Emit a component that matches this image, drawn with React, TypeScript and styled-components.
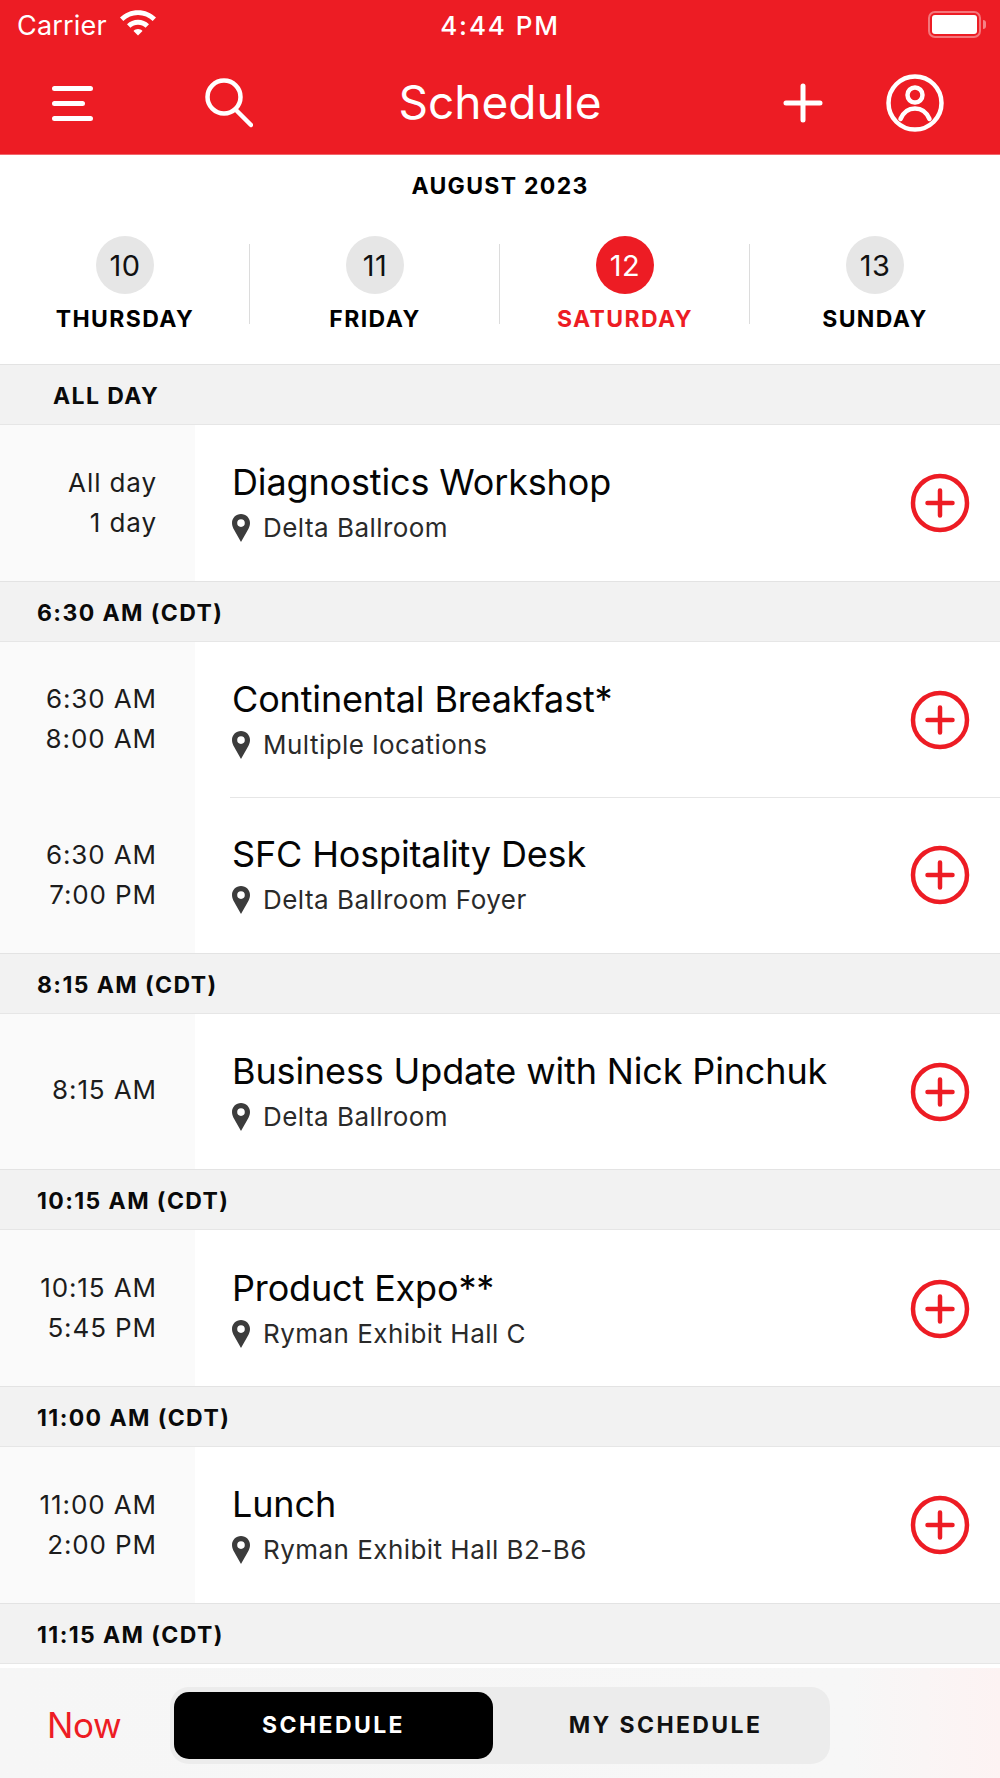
import React from "react";
import styled, { createGlobalStyle } from "styled-components";

const days = [
  { num: "10", name: "THURSDAY" },
  { num: "11", name: "FRIDAY" },
  { num: "12", name: "SATURDAY", active: true },
  { num: "13", name: "SUNDAY" },
];

const sections = [
  {
    label: "ALL DAY",
    indent: true,
    items: [{ start: "All day", end: "1 day", title: "Diagnostics Workshop", place: "Delta Ballroom" }],
  },
  {
    label: "6:30 AM (CDT)",
    items: [
      { start: "6:30 AM", end: "8:00 AM", title: "Continental Breakfast*", place: "Multiple locations" },
      { start: "6:30 AM", end: "7:00 PM", title: "SFC Hospitality Desk", place: "Delta Ballroom Foyer" },
    ],
  },
  {
    label: "8:15 AM (CDT)",
    items: [{ start: "8:15 AM", title: "Business Update with Nick Pinchuk", place: "Delta Ballroom" }],
  },
  {
    label: "10:15 AM (CDT)",
    items: [{ start: "10:15 AM", end: "5:45 PM", title: "Product Expo**", place: "Ryman Exhibit Hall C" }],
  },
  {
    label: "11:00 AM (CDT)",
    items: [{ start: "11:00 AM", end: "2:00 PM", title: "Lunch", place: "Ryman Exhibit Hall B2-B6" }],
  },
];

export default function App() {
  return (
    <Page>
      <GlobalStyle />
      <TopBar>
        <StatusBar>
          <Carrier>
            Carrier
            <svg width="38" height="28" viewBox="0 0 38 28" fill="#fff">
              <path d="M1 9.5C5.8 4.8 12 2.2 19 2.2S32.2 4.8 37 9.5l-3.3 3.4C29.8 9.2 24.700 7 19 7S8.200 9.200 4.300 12.900z" />
              <path d="M8 16.300C11 13.500 14.800 11.800 19 11.800s8 1.700 11 4.500l-3.400 3.400C24.600 17.800 21.900 16.700 19 16.700s-5.600 1.100-7.600 3z" />
              <path d="M14.500 22.900C15.700 21.800 17.300 21.100 19 21.100s3.300.7 4.500 1.800L19 27.400z" />
            </svg>
          </Carrier>
          <Clock>4:44 PM</Clock>
          <Battery>
            <BatteryBody>
              <BatteryFill />
            </BatteryBody>
            <BatteryCap />
          </Battery>
        </StatusBar>
        <NavBar>
          <NavGroup>
            <svg width="41" height="35" viewBox="0 0 41 35" fill="none" stroke="#fff" strokeWidth="5" strokeLinecap="round">
              <path d="M2.500 2.500h36M2.500 17.500h28M2.500 32.500h36" />
            </svg>
            <svg width="48" height="50" viewBox="0 0 48 50" fill="none" stroke="#fff" strokeLinecap="round">
              <circle cx="19" cy="19" r="16.500" strokeWidth="4.500" />
              <path d="M32 33l14 14" strokeWidth="4.500" />
            </svg>
          </NavGroup>
          <NavTitle>Schedule</NavTitle>
          <NavGroupEnd>
            <svg width="40" height="40" viewBox="0 0 40 40" fill="none" stroke="#fff" strokeWidth="5" strokeLinecap="round">
              <path d="M20 3v34M3 20h34" />
            </svg>
            <svg width="60" height="60" viewBox="0 0 60 60" fill="none" stroke="#fff" strokeWidth="4.500">
              <circle cx="30" cy="30" r="26.500" />
              <circle cx="30" cy="22" r="7.500" />
              <path d="M15.500 46c3-7 8.500-10.500 14.500-10.500S41.500 39 44.500 46" strokeLinecap="round" />
            </svg>
          </NavGroupEnd>
        </NavBar>
      </TopBar>

      <DateStrip>
        <MonthLabel>AUGUST 2023</MonthLabel>
        <DayRow>
          {days.map((d) => (
            <DayCell key={d.num}>
              <DayNum $active={d.active}>{d.num}</DayNum>
              <DayName $active={d.active}>{d.name}</DayName>
            </DayCell>
          ))}
        </DayRow>
      </DateStrip>

      {sections.map((s) => (
        <section key={s.label}>
          <SectionHead $indent={s.indent}>{s.label}</SectionHead>
          {s.items.map((item, i) => (
            <Row key={item.title}>
              <TimeCol $single={!item.end}>
                <span>{item.start}</span>
                {item.end && <span>{item.end}</span>}
              </TimeCol>
              <RowMain>
                <RowInner $divider={i > 0}>
                  <RowText>
                    <Title>{item.title}</Title>
                    <Place>
                      <svg width="18" height="28" viewBox="0 0 18 28">
                        <path
                          fillRule="evenodd"
                          fill="#3c3c3c"
                          d="M9 0c5 0 9 3.900 9 8.900 0 2.600-1 5.100-2.500 7.700C13.800 19.600 11.500 23.800 9 28 6.500 23.800 4.200 19.600 2.500 16.600 1 14 0 11.500 0 8.900 0 3.900 4 0 9 0zm0 5.300a3.800 3.800 0 100 7.600 3.800 3.800 0 000-7.600z"
                        />
                      </svg>
                      {item.place}
                    </Place>
                  </RowText>
                  <svg width="60" height="60" viewBox="0 0 60 60" fill="none" stroke="#ed1c24" strokeLinecap="round">
                    <circle cx="30" cy="30" r="27" strokeWidth="4.500" />
                    <path d="M30 17.500v25M17.500 30h25" strokeWidth="4.500" />
                  </svg>
                </RowInner>
              </RowMain>
            </Row>
          ))}
        </section>
      ))}
      <SectionHead>11:15 AM (CDT)</SectionHead>

      <BottomBar>
        <NowLink>Now</NowLink>
        <Segments>
          <Segment $active>SCHEDULE</Segment>
          <Segment $offset>MY SCHEDULE</Segment>
        </Segments>
      </BottomBar>
    </Page>
  );
}

const GlobalStyle = createGlobalStyle`
  body {
    margin: 0;
    background: #fff;
    font-family: Inter, "Liberation Sans", sans-serif;
  }
`;

const Page = styled.div`
  width: 1000px;
  height: 1778px;
  overflow: hidden;
  display: flex;
  flex-direction: column;
  color: #000;
`;

const TopBar = styled.header`
  height: 155px;
  flex: none;
  background: #ed1c24;
  color: #fff;
  border-bottom: 1px solid #f2666c;
  box-sizing: border-box;
`;

const StatusBar = styled.div`
  height: 50px;
  display: grid;
  grid-template-columns: 1fr auto 1fr;
  align-items: center;
  padding: 0 17px;
`;

const Carrier = styled.div`
  display: flex;
  align-items: center;
  gap: 12px;
  font-size: 27px;
  letter-spacing: 0.2px;
  svg {
    margin-top: -6px;
  }
`;

const Clock = styled.div`
  font-size: 26px;
  font-weight: 500;
  letter-spacing: 1.9px;
`;

const Battery = styled.div`
  justify-self: end;
  display: flex;
  align-items: center;
  gap: 2px;
  margin: -2px -3px 0 0;
`;

const BatteryBody = styled.div`
  width: 53px;
  height: 27px;
  box-sizing: border-box;
  border: 2px solid rgba(255, 255, 255, 0.4);
  border-radius: 7px;
  padding: 2px;
`;

const BatteryFill = styled.div`
  height: 100%;
  background: #fff;
  border-radius: 3px;
`;

const BatteryCap = styled.div`
  width: 3px;
  height: 9px;
  background: rgba(255, 255, 255, 0.45);
  border-radius: 0 3px 3px 0;
`;

const NavBar = styled.nav`
  height: 104px;
  display: grid;
  grid-template-columns: 1fr auto 1fr;
  align-items: center;
  padding: 0 55px 6px 52px;
`;

const NavGroup = styled.div`
  display: flex;
  align-items: center;
  gap: 112px;
  margin-top: 2px;
`;

const NavGroupEnd = styled(NavGroup)`
  justify-content: flex-end;
  gap: 62px;
`;

const NavTitle = styled.h1`
  margin: 0 0 0 3px;
  font-size: 46px;
  font-weight: 400;
  letter-spacing: 0;
`;

const DateStrip = styled.div`
  height: 209px;
  flex: none;
  box-sizing: border-box;
  padding-top: 17px;
  background: #fff;
`;

const MonthLabel = styled.div`
  text-align: center;
  font-size: 23px;
  font-weight: 700;
  letter-spacing: 1.3px;
  line-height: 28px;
`;

const DayRow = styled.div`
  display: grid;
  grid-template-columns: repeat(4, 1fr);
  margin-top: 36px;
`;

const DayCell = styled.div`
  display: flex;
  flex-direction: column;
  align-items: center;
  gap: 11px;
  position: relative;
  & + &::before {
    content: "";
    position: absolute;
    left: -1px;
    top: 8px;
    width: 1px;
    height: 80px;
    background: #dcdcdc;
  }
`;

const DayNum = styled.div<{ $active?: boolean }>`
  width: 58px;
  height: 58px;
  border-radius: 50%;
  display: flex;
  align-items: center;
  justify-content: center;
  font-size: 29px;
  letter-spacing: 0.5px;
  background: ${(p) => (p.$active ? "#ed1c24" : "#e6e6e6")};
  color: ${(p) => (p.$active ? "#fff" : "#111")};
`;

const DayName = styled.div<{ $active?: boolean }>`
  font-size: 23px;
  font-weight: 700;
  line-height: 28px;
  letter-spacing: 1.4px;
  color: ${(p) => (p.$active ? "#ed1c24" : "#000")};
`;

const SectionHead = styled.div<{ $indent?: boolean }>`
  height: 61px;
  flex: none;
  box-sizing: border-box;
  display: flex;
  align-items: center;
  padding-top: 3px;
  padding-left: ${(p) => (p.$indent ? "53px" : "37px")};
  background: #f2f2f2;
  border-top: 1px solid #e3e3e3;
  border-bottom: 1px solid #e6e6e6;
  font-size: 23px;
  font-weight: 700;
  letter-spacing: 1.4px;
  color: #0a0a0a;
`;

const Row = styled.div`
  height: 155.6px;
  display: flex;
  background: #fff;
`;

const TimeCol = styled.div<{ $single?: boolean }>`
  width: 195px;
  flex: none;
  box-sizing: border-box;
  padding-right: 38px;
  padding-bottom: ${(p) => (p.$single ? "4px" : "0")};
  background: #fafafa;
  display: flex;
  flex-direction: column;
  justify-content: center;
  align-items: flex-end;
  gap: 8px;
  font-size: 26px;
  line-height: 32px;
  letter-spacing: 0.9px;
  color: #1c1c1c;
`;

const RowMain = styled.div`
  flex: 1;
  min-width: 0;
  padding-left: 35px;
  display: flex;
`;

const RowInner = styled.div<{ $divider?: boolean }>`
  flex: 1;
  min-width: 0;
  display: flex;
  align-items: center;
  justify-content: space-between;
  padding-right: 30px;
  border-top: ${(p) => (p.$divider ? "1px solid #e6e6e6" : "1px solid transparent")};
`;

const RowText = styled.div`
  display: flex;
  flex-direction: column;
  gap: 8px;
  margin-top: -2px;
`;

const Title = styled.div`
  font-size: 36px;
  line-height: 44px;
  letter-spacing: -0.15px;
  margin-left: 2px;
  color: #050505;
`;

const Place = styled.div`
  display: flex;
  align-items: center;
  gap: 13px;
  font-size: 26px;
  line-height: 32px;
  letter-spacing: 0.46px;
  color: #2a2a2a;
  svg {
    margin-left: 2px;
    flex: none;
  }
`;

const BottomBar = styled.footer`
  flex: 1;
  display: flex;
  align-items: center;
  padding: 5px 0 0 47px;
  margin-top: 4px;
  background: linear-gradient(90deg, #f6f6f6 0%, #f7f7f7 85%, #fdf3f3 100%);
`;

const NowLink = styled.div`
  width: 123px;
  flex: none;
  font-size: 35px;
  color: #ed1c24;
  letter-spacing: -0.3px;
`;

const Segments = styled.div`
  width: 660px;
  height: 77px;
  box-sizing: border-box;
  padding: 5px 4px;
  display: grid;
  grid-template-columns: 319px 1fr;
  background: #ececec;
  border-radius: 19px;
`;

const Segment = styled.div<{ $active?: boolean; $offset?: boolean }>`
  display: flex;
  align-items: center;
  justify-content: center;
  padding-left: ${(p) => (p.$offset ? "12px" : "0")};
  border-radius: 15px;
  font-size: 23px;
  font-weight: 700;
  letter-spacing: 2.4px;
  background: ${(p) => (p.$active ? "#000" : "transparent")};
  color: ${(p) => (p.$active ? "#fff" : "#111")};
`;
